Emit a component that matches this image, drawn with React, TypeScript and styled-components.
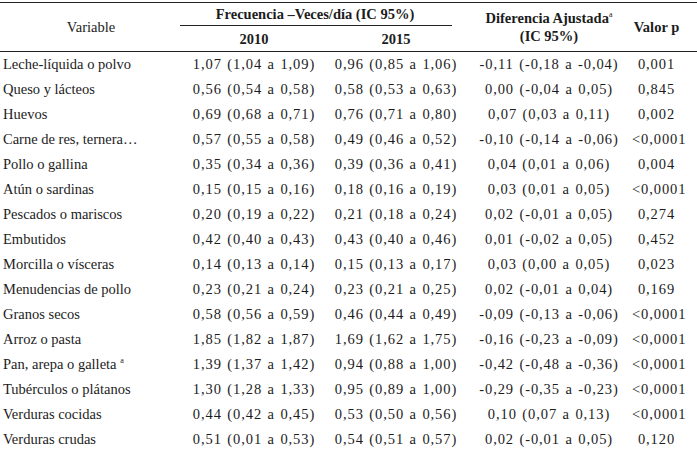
import styled, {createGlobalStyle} from "styled-components";

const GlobalStyle = createGlobalStyle`
  html, body {
    margin: 0;
    padding: 0;
    background: #ffffff;
  }
  body {
    font-family: "Liberation Serif", "Times New Roman", serif;
    color: #1c1c1c;
  }
`

const COLS = "182px 144px 140px 166px 65px"

const Table = styled.div`
  width: 697px;
  padding-top: 2px;
  font-size: 14.5px;
`

const Head = styled.div`
  display: grid;
  grid-template-columns: ${COLS};
  grid-template-rows: 23px 25px;
  border-top: 1.5px solid #222;
  border-bottom: 1.5px solid #222;
  font-weight: bold;
`

const HeadCell = styled.div<{ $col: string; $row: string; $pr?: number }>`
  grid-column: ${p => p.$col};
  grid-row: ${p => p.$row};
  display: flex;
  flex-direction: column;
  align-items: center;
  justify-content: center;
  padding-right: ${p => p.$pr || 0}px;
  line-height: 18px;
  text-align: center;
`

const PlainHead = styled(HeadCell)`
  font-weight: normal;
`

const Span = styled.div`
  grid-column: 2 / 4;
  grid-row: 1;
  display: flex;
  align-items: center;
  justify-content: center;
  margin: 0 14px 0 -2px;
  border-bottom: 1.5px solid #222;
  padding-right: 2px;
`

const Sup = styled.sup`
  font-size: 8px;
  font-weight: normal;
  vertical-align: 6px;
  line-height: 0;
`

const Row = styled.div`
  display: grid;
  grid-template-columns: ${COLS};
  height: 25px;
  align-items: center;
`

const Name = styled.div`
  padding-left: 3px;
  white-space: nowrap;
`

const Num = styled.div<{ $pr?: number }>`
  text-align: center;
  white-space: nowrap;
  letter-spacing: 0.9px;
  word-spacing: 1px;
  padding-right: ${p => p.$pr || 0}px;
`

type Item = {
    name: string
    sup?: boolean
    a: string
    b: string
    diff: string
    p: string
}

const rows: Item[] = [
    {name: "Leche-líquida o polvo", a: "1,07 (1,04 a 1,09)", b: "0,96 (0,85 a 1,06)", diff: "-0,11 (-0,18 a -0,04)", p: "0,001"},
    {name: "Queso y lácteos", a: "0,56 (0,54 a 0,58)", b: "0,58 (0,53 a 0,63)", diff: "0,00 (-0,04 a 0,05)", p: "0,845"},
    {name: "Huevos", a: "0,69 (0,68 a 0,71)", b: "0,76 (0,71 a 0,80)", diff: "0,07 (0,03 a 0,11)", p: "0,002"},
    {name: "Carne de res, ternera…", a: "0,57 (0,55 a 0,58)", b: "0,49 (0,46 a 0,52)", diff: "-0,10 (-0,14 a -0,06)", p: "<0,0001"},
    {name: "Pollo o gallina", a: "0,35 (0,34 a 0,36)", b: "0,39 (0,36 a 0,41)", diff: "0,04 (0,01 a 0,06)", p: "0,004"},
    {name: "Atún o sardinas", a: "0,15 (0,15 a 0,16)", b: "0,18 (0,16 a 0,19)", diff: "0,03 (0,01 a 0,05)", p: "<0,0001"},
    {name: "Pescados o mariscos", a: "0,20 (0,19 a 0,22)", b: "0,21 (0,18 a 0,24)", diff: "0,02 (-0,01 a 0,05)", p: "0,274"},
    {name: "Embutidos", a: "0,42 (0,40 a 0,43)", b: "0,43 (0,40 a 0,46)", diff: "0,01 (-0,02 a 0,05)", p: "0,452"},
    {name: "Morcilla o vísceras", a: "0,14 (0,13 a 0,14)", b: "0,15 (0,13 a 0,17)", diff: "0,03 (0,00 a 0,05)", p: "0,023"},
    {name: "Menudencias de pollo", a: "0,23 (0,21 a 0,24)", b: "0,23 (0,21 a 0,25)", diff: "0,02 (-0,01 a 0,04)", p: "0,169"},
    {name: "Granos secos", a: "0,58 (0,56 a 0,59)", b: "0,46 (0,44 a 0,49)", diff: "-0,09 (-0,13 a -0,06)", p: "<0,0001"},
    {name: "Arroz o pasta", a: "1,85 (1,82 a 1,87)", b: "1,69 (1,62 a 1,75)", diff: "-0,16 (-0,23 a -0,09)", p: "<0,0001"},
    {name: "Pan, arepa o galleta", sup: true, a: "1,39 (1,37 a 1,42)", b: "0,94 (0,88 a 1,00)", diff: "-0,42 (-0,48 a -0,36)", p: "<0,0001"},
    {name: "Tubérculos o plátanos", a: "1,30 (1,28 a 1,33)", b: "0,95 (0,89 a 1,00)", diff: "-0,29 (-0,35 a -0,23)", p: "<0,0001"},
    {name: "Verduras cocidas", a: "0,44 (0,42 a 0,45)", b: "0,53 (0,50 a 0,56)", diff: "0,10 (0,07 a 0,13)", p: "<0,0001"},
    {name: "Verduras crudas", a: "0,51 (0,01 a 0,53)", b: "0,54 (0,51 a 0,57)", diff: "0,02 (-0,01 a 0,05)", p: "0,120"},
]

const App = () => {
    return (
        <Table>
            <GlobalStyle/>
            <Head>
                <PlainHead $col="1" $row="1 / 3">Variable</PlainHead>
                <Span>Frecuencia –Veces/día (IC 95%)</Span>
                <HeadCell $col="2" $row="2">2010</HeadCell>
                <HeadCell $col="3" $row="2">2015</HeadCell>
                <HeadCell $col="4" $row="1 / 3">
                    <span>Diferencia Ajustada<Sup>a</Sup></span>
                    <span>(IC 95%)</span>
                </HeadCell>
                <HeadCell $col="5" $row="1 / 3" $pr={16}>Valor p</HeadCell>
            </Head>
            {rows.map(r => (
                <Row key={r.name}>
                    <Name>{r.name}{r.sup && <> <Sup>a</Sup></>}</Name>
                    <Num>{r.a}</Num>
                    <Num>{r.b}</Num>
                    <Num>{r.diff}</Num>
                    <Num $pr={16}>{r.p}</Num>
                </Row>
            ))}
        </Table>
    )
}

export default App
